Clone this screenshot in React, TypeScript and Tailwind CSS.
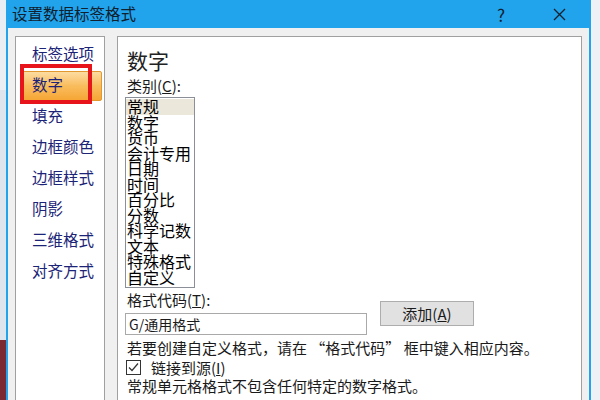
import React from "react";

const font = { fontFamily: '"Noto Sans CJK SC", "Noto Sans", sans-serif' };

const navItems = ["标签选项", "数字", "填充", "边框颜色", "边框样式", "阴影", "三维格式", "对齐方式"];
const cats = ["常规", "数字", "货币", "会计专用", "日期", "时间", "百分比", "分数", "科学记数", "文本", "特殊格式", "自定义"];

export default function App() {
  return (
    <div className="w-[600px] h-[400px] overflow-hidden flex bg-[#eef1f4]" style={font}>
      <div className="w-[6px] h-full flex flex-col">
        <div className="h-[90px] bg-[#e8eef4]" />
        <div className="flex-1 bg-[#dfe5ec]" />
        <div className="h-[60px] bg-[#7a2a30]" />
      </div>
      <div className="w-[585px] h-full flex flex-col border-x-2 border-[#21a4ec] bg-[#f0f0f0]">
        <div className="h-[28px] shrink-0 bg-[#21a4ec] flex items-center text-[#10202e]">
          <span className="ml-[4px] text-[15.5px] leading-none">设置数据标签格式</span>
          <span className="ml-auto mr-[48px] text-[17px] leading-none">?</span>
          <svg className="mr-[23px]" width="13" height="13" viewBox="0 0 13 13">
            <path d="M1 1 L12 12 M12 1 L1 12" stroke="#10202e" strokeWidth="1.3" fill="none" />
          </svg>
        </div>
        <div className="flex-1 flex pt-[8px] pl-[7px]">
          <div className="w-[90px] h-[400px] bg-white border border-[#a0a0a0] pt-[1px] pr-[2px]">
            {navItems.map((t, i) => (
              <div key={t} className="relative h-[31px] flex items-center">
                {i === 1 && (
                  <>
                    <div className="absolute left-[4px] right-0 top-[2px] bottom-[-1px] rounded-[2px] border border-[#e2982e] bg-gradient-to-b from-[#fcdca0] via-[#f9bc5c] to-[#f6a634]" />
                    <div className="absolute left-[4px] w-[72px] top-[-5px] h-[40px] border-[4px] border-[#e8141c]" />
                  </>
                )}
                <span className="relative ml-[16px] text-[15.5px] leading-none text-[#1c2478]">{t}</span>
              </div>
            ))}
          </div>
          <div className="ml-[12px] w-[465px] h-[400px] bg-white border border-[#a0a0a0] pt-[9px] pl-[7px] text-[#1a1a1a]">
            <div className="ml-[2px] h-[28px] text-[21px] leading-[28px] text-[#222]">数字</div>
            <div className="ml-[2px] mt-[2px] h-[20px] text-[15px] leading-[20px]">
              类别(<span className="underline">C</span>):
            </div>
            <div className="mt-[1px] w-[70px] h-[191px] border border-[#8a8f98] pt-[1px] overflow-hidden">
              {cats.map((c, i) => (
                <div
                  key={c}
                  className={`h-[15.5px] leading-[15.5px] text-[16px] pl-[1px] whitespace-nowrap text-black ${i === 0 ? "bg-[#ebe7da]" : ""}`}
                >
                  {c}
                </div>
              ))}
            </div>
            <div className="flex">
              <div className="w-[242px]">
                <div className="ml-[2px] mt-[2px] h-[20px] text-[15px] leading-[20px]">
                  格式代码(<span className="underline">T</span>):
                </div>
                <div className="mt-[3px] h-[22px] border border-[#a9a9a9] flex items-center pl-[3px] text-[14px] leading-none">
                  G/通用格式
                </div>
              </div>
              <div className="ml-[13px] mt-[13px] w-[94px] h-[25px] bg-[#e1e1e1] border border-[#adadad] flex items-center justify-center text-[15px] leading-none">
                添加(<span className="underline">A</span>)
              </div>
            </div>
            <div className="ml-[2px] mt-[3px] h-[20px] text-[15px] leading-[20px] whitespace-nowrap">
              若要创建自定义格式，请在 “格式代码” 框中键入相应内容。
            </div>
            <div className="ml-[1px] h-[18px] flex items-center">
              <svg width="15" height="15" viewBox="0 0 15 15">
                <rect x="0.5" y="0.5" width="14" height="14" fill="white" stroke="#333" />
                <path d="M3 7.5 L6 10.5 L12 3.5" stroke="#333" strokeWidth="1.2" fill="none" />
              </svg>
              <span className="ml-[10px] text-[15px] leading-none">
                链接到源(<span className="underline">I</span>)
              </span>
            </div>
            <div className="ml-[2px] h-[20px] text-[15px] leading-[20px] whitespace-nowrap">
              常规单元格格式不包含任何特定的数字格式。
            </div>
          </div>
        </div>
      </div>
      <div className="flex-1 h-full bg-[#eef2f6]" />
    </div>
  );
}
